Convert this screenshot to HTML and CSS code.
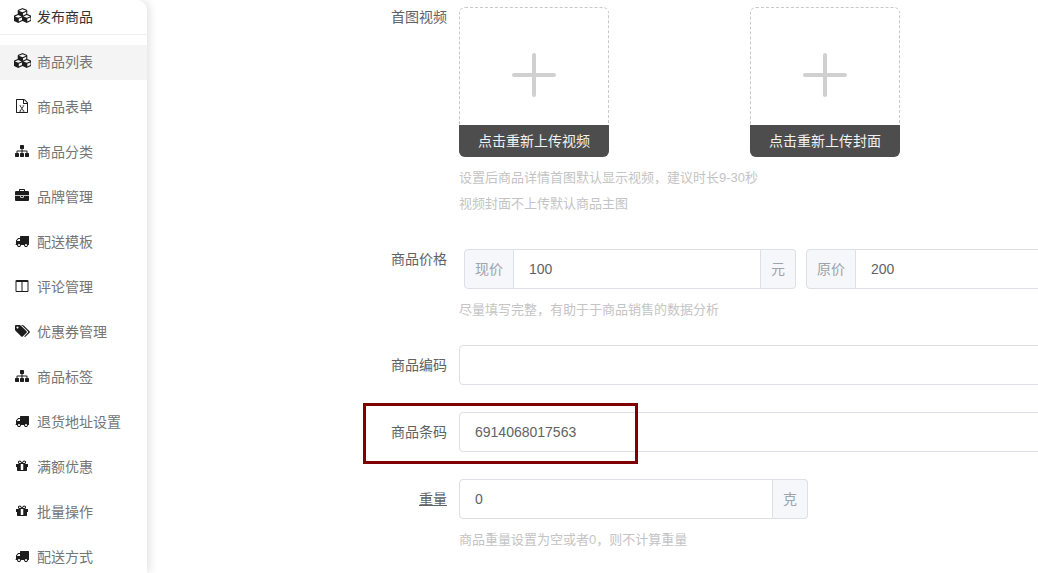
FILE: index.html
```html
<!DOCTYPE html>
<html lang="zh-CN">
<head>
<meta charset="utf-8">
<title>商品</title>
<link rel="stylesheet" href="styles.css">
</head>
<body>
<svg class="defs" aria-hidden="true">
  <symbol id="i-cubes" viewBox="0 0 2048 1792"><path d="M576 1632l384-192v-314l-384 164v342zm-64-454l404-173-404-173-404 173 404 173zm1088 454l384-192v-314l-384 164v342zm-64-454l404-173-404-173-404 173 404 173zm-448-293l384-165v-266l-384 164v267zm-64-379l441-189-441-189-441 189 441 189zm1088 518v416q0 36-19 67t-52 47l-448 224q-25 14-57 14t-57-14l-448-224q-4-2-6-4-2 2-6 4l-448 224q-25 14-57 14t-57-14l-448-224q-33-16-52-47t-19-67v-416q0-38 21.500-70t56.500-48l434-186v-400q0-38 21.500-70t56.500-48l448-192q23-10 50-10t50 10l448 192q35 16 56.500 48t21.500 70v400l434 186q36 16 57 48t21 70z"/></symbol>
  <symbol id="i-file" viewBox="0 0 1792 1792"><path d="M1596 380q28 28 48 76t20 88v1152q0 40-28 68t-68 28h-1344q-40 0-68-28t-28-68v-1600q0-40 28-68t68-28h896q40 0 88 20t76 48zm-444-244v376h376q-10-29-22-41l-313-313q-12-12-41-22zm384 1528v-1024h-416q-40 0-68-28t-28-68v-416h-768v1536h1280z"/><path d="M560 820h230v90h-60l150 220 150-220h-60v-90h230v90h-60l-210 290 220 300h60v90h-240v-90h60l-150-220-150 220h60v90h-240v-90h60l220-300-210-290h-60z"/></symbol>
  <symbol id="i-sitemap" viewBox="0 0 1792 1792"><path d="M1792 1248v320q0 40-28 68t-68 28h-320q-40 0-68-28t-28-68v-320q0-40 28-68t68-28h96v-192h-512v192h96q40 0 68 28t28 68v320q0 40-28 68t-68 28h-320q-40 0-68-28t-28-68v-320q0-40 28-68t68-28h96v-192h-512v192h96q40 0 68 28t28 68v320q0 40-28 68t-68 28h-320q-40 0-68-28t-28-68v-320q0-40 28-68t68-28h96v-192q0-52 38-90t90-38h512v-192h-96q-40 0-68-28t-28-68v-320q0-40 28-68t68-28h320q40 0 68 28t28 68v320q0 40-28 68t-68 28h-96v192h512q52 0 90 38t38 90v192h96q40 0 68 28t28 68z"/></symbol>
  <symbol id="i-briefcase" viewBox="0 0 1792 1792"><path d="M640 256h512v-128h-512v128zm1152 640v480q0 66-47 113t-113 47h-1472q-66 0-113-47t-47-113v-480h672v160q0 26 19 45t45 19h320q26 0 45-19t19-45v-160h672zm-768 0v128h-256v-128h256zm768-480v384h-1792v-384q0-66 47-113t113-47h352v-160q0-40 28-68t68-28h576q40 0 68 28t28 68v160h352q66 0 113 47t47 113z"/></symbol>
  <symbol id="i-truck" viewBox="0 0 1792 1792"><path d="M640 1408q0-52-38-90t-90-38-90 38-38 90 38 90 90 38 90-38 38-90zm-384-512h384v-256h-158q-13 0-22 9l-195 195q-9 9-9 22v30zm1280 512q0-52-38-90t-90-38-90 38-38 90 38 90 90 38 90-38 38-90zm256-1088v1024q0 15-4 26.500t-13.500 18.500-16.500 11.500-23.500 6-22.500 2-25.500 0-22.500-.5q0 106-75 181t-181 75-181-75-75-181h-384q0 106-75 181t-181 75-181-75-75-181h-64q-3 0-22.500.5t-25.500 0-22.500-2-23.500-6-16.500-11.500-13.500-18.500-4-26.500q0-26 19-45t45-19v-320q0-8-.5-35t0-38 2.500-34.500 6.500-37 14-30.500 22.500-30l198-198q19-19 50.500-32t58.500-13h160v-192q0-26 19-45t45-19h1024q26 0 45 19t19 45z"/></symbol>
  <symbol id="i-columns" viewBox="0 0 1792 1792"><path d="M224 1536h608v-1152h-640v1120q0 13 9.500 22.500t22.500 9.500zm1376-32v-1120h-640v1152h608q13 0 22.500-9.500t9.500-22.500zm128-1216v1216q0 66-47 113t-113 47h-1344q-66 0-113-47t-47-113v-1216q0-66 47-113t113-47h1344q66 0 113 47t47 113z"/></symbol>
  <symbol id="i-tags" viewBox="0 0 1920 1792"><path d="M448 448q0-53-37.500-90.500t-90.500-37.500-90.500 37.500-37.500 90.500 37.500 90.500 90.500 37.500 90.500-37.500 37.500-90.500zm1067 576q0 53-37 90l-491 492q-39 37-91 37-53 0-90-37l-715-716q-38-37-64.500-101t-26.500-117v-416q0-52 38-90t90-38h416q53 0 117 26.500t102 64.500l715 714q37 39 37 91zm384 0q0 53-37 90l-491 492q-39 37-91 37-36 0-59-14t-53-45l470-470q37-37 37-90 0-52-37-91l-715-714q-38-38-102-64.500t-117-26.500h224q53 0 117 26.500t102 64.500l715 714q37 39 37 91z"/></symbol>
  <symbol id="i-gift" viewBox="0 0 1792 1792"><path d="M1056 1356v-716h-320v716q0 25 18 38.500t46 13.500h192q28 0 46-13.500t18-38.500zm-456-844h195l-126-161q-26-31-69-31-40 0-68 28t-28 68 28 68 68 28zm688-96q0-40-28-68t-68-28q-43 0-69 31l-125 161h194q40 0 68-28t28-68zm376 256v320q0 14-9 23t-23 9h-96v416q0 40-28 68t-68 28h-1088q-40 0-68-28t-28-68v-416h-96q-14 0-23-9t-9-23v-320q0-14 9-23t23-9h440q-93 0-158.500-65.500t-65.500-158.500 65.500-158.500 158.500-65.500q107 0 168 77l128 165 128-165q61-77 168-77 93 0 158.500 65.500t65.500 158.500-65.500 158.500-158.500 65.500h440q14 0 23 9t9 23z"/></symbol>
</svg>

<div class="page">
  <aside class="sidebar">
    <div class="side-head">
      <span class="ico"><svg class="cubes"><use href="#i-cubes"/></svg></span>发布商品
    </div>
    <nav class="side-list">
      <a class="side-item active"><span class="ico"><svg class="cubes"><use href="#i-cubes"/></svg></span>商品列表</a>
      <a class="side-item"><span class="ico"><svg><use href="#i-file"/></svg></span>商品表单</a>
      <a class="side-item"><span class="ico"><svg><use href="#i-sitemap"/></svg></span>商品分类</a>
      <a class="side-item"><span class="ico"><svg><use href="#i-briefcase"/></svg></span>品牌管理</a>
      <a class="side-item"><span class="ico"><svg><use href="#i-truck"/></svg></span>配送模板</a>
      <a class="side-item"><span class="ico"><svg><use href="#i-columns"/></svg></span>评论管理</a>
      <a class="side-item"><span class="ico"><svg class="tags"><use href="#i-tags"/></svg></span>优惠券管理</a>
      <a class="side-item"><span class="ico"><svg><use href="#i-sitemap"/></svg></span>商品标签</a>
      <a class="side-item"><span class="ico"><svg><use href="#i-truck"/></svg></span>退货地址设置</a>
      <a class="side-item"><span class="ico"><svg><use href="#i-gift"/></svg></span>满额优惠</a>
      <a class="side-item"><span class="ico"><svg><use href="#i-gift"/></svg></span>批量操作</a>
      <a class="side-item"><span class="ico"><svg><use href="#i-truck"/></svg></span>配送方式</a>
    </nav>
  </aside>

  <main class="form">
    <section class="row row-video">
      <label class="label label-top">首图视频</label>
      <div class="field">
        <div class="uploads">
          <div class="upload">
            <div class="upload-plus"><svg class="plus" viewBox="0 0 44 44"><path d="M22 2v40M2 22h40"/></svg></div>
            <div class="upload-bar">点击重新上传视频</div>
          </div>
          <div class="upload">
            <div class="upload-plus"><svg class="plus" viewBox="0 0 44 44"><path d="M22 2v40M2 22h40"/></svg></div>
            <div class="upload-bar">点击重新上传封面</div>
          </div>
        </div>
        <p class="hint">设置后商品详情首图默认显示视频，建议时长9-30秒</p>
        <p class="hint hint-next">视频封面不上传默认商品主图</p>
      </div>
    </section>

    <section class="row row-price">
      <label class="label label-top">商品价格</label>
      <div class="field">
        <div class="prices">
          <div class="group group-price">
            <span class="addon addon-l">现价</span>
            <input class="input" value="100">
            <span class="addon addon-r">元</span>
          </div>
          <div class="group group-price">
            <span class="addon addon-l">原价</span>
            <input class="input" value="200">
          </div>
        </div>
        <p class="hint">尽量填写完整，有助于于商品销售的数据分析</p>
      </div>
    </section>

    <section class="row row-code">
      <label class="label">商品编码</label>
      <div class="field"><input class="input input-solo" value=""></div>
    </section>

    <section class="row row-code">
      <label class="label">商品条码</label>
      <div class="field"><input class="input input-solo" value="6914068017563"></div>
    </section>

    <section class="row row-weight">
      <label class="label"><span class="underline">重量</span></label>
      <div class="field">
        <div class="group group-weight">
          <input class="input" value="0">
          <span class="addon addon-r">克</span>
        </div>
        <p class="hint">商品重量设置为空或者0，则不计算重量</p>
      </div>
    </section>

    <div class="callout"></div>
  </main>
</div>
</body>
</html>
```
FILE: styles.css
```css
* { box-sizing: border-box; }
html, body { margin: 0; height: 100%; overflow: hidden; background: #fff; }
body {
  font-family: "Liberation Sans", "Noto Sans CJK SC", sans-serif;
  font-size: 14px;
  color: #606266;
}
.defs { display: none; }
.page { display: flex; height: 573px; overflow: hidden; position: relative; }

/* sidebar */
.sidebar {
  flex: 0 0 147px;
  height: 573px;
  background: #fff;
  border-top-right-radius: 10px;
  box-shadow: 3px 0 8px rgba(0, 0, 0, .11);
  position: relative;
}
.side-head {
  display: flex;
  align-items: center;
  height: 35px;
  padding: 0 0 3px 10px;
  color: #333;
  border-bottom: 1px solid #eeeef4;
}
.side-item {
  display: flex;
  align-items: center;
  height: 35px;
  margin-top: 10px;
  padding: 0 0 4px 10px;
  color: #757575;
}
.side-item.active { background: #f4f4f4; }
.ico {
  flex: 0 0 24px;
  margin-right: 3px;
  display: flex;
  justify-content: center;
  align-items: center;
}
.ico svg { width: 14px; height: 14px; fill: #1c1c1c; display: block; }
.ico svg.cubes { width: 17px; height: 15px; }
.ico svg.tags { width: 15px; height: 14px; }

/* form */
.form { flex: 1 1 auto; min-width: 0; padding-top: 7px; position: relative; }
.row { display: flex; align-items: flex-start; }
.row-video { margin-bottom: 32px; }
.row-price { margin-bottom: 22px; }
.row-code { margin-bottom: 27px; }
.label {
  flex: 0 0 312px;
  padding-right: 12px;
  text-align: right;
  line-height: 40px;
  color: #606266;
}
.label-top { line-height: 20px; }
.underline { text-decoration: underline; }
.field { flex: 0 0 auto; }

/* uploads */
.uploads { display: flex; gap: 141px; }
.upload {
  width: 150px;
  height: 150px;
  border: 1px dashed #c8c8c8;
  border-radius: 6px;
  display: flex;
  flex-direction: column;
}
.upload-plus {
  flex: 1 1 auto;
  display: flex;
  justify-content: center;
  align-items: flex-start;
  padding-top: 45px;
}
.plus { width: 44px; height: 44px; fill: none; stroke: #d0d0d0; stroke-width: 4; stroke-linecap: round; }
.upload-bar {
  height: 32px;
  margin: 0 -1px -1px;
  background: #4d4d4d;
  border-radius: 0 0 6px 6px;
  color: #f2f2f2;
  line-height: 33px;
  text-align: center;
}
.hint {
  margin: 8px 0 0;
  font-size: 13px;
  line-height: 26px;
  color: #c4c4c4;
}
.hint-next { margin-top: 0; }

/* inputs */
.prices { display: flex; gap: 10px; padding-left: 5px; width: 800px; }
.group { display: flex; height: 40px; }
.group-price { flex: 0 0 332px; }
.group-weight { width: 349px; }
.input {
  flex: 1 1 auto;
  min-width: 0;
  height: 40px;
  padding: 0 15px;
  border: 1px solid #dcdfe6;
  border-radius: 4px;
  outline: none;
  background: #fff;
  font: inherit;
  color: #606266;
}
.input-solo { display: block; width: 800px; }
.addon {
  flex: 0 0 auto;
  height: 40px;
  line-height: 38px;
  padding: 0 10px;
  background: #f5f7fa;
  border: 1px solid #dcdfe6;
  color: #a0a3a8;
}
.addon-l { border-radius: 4px 0 0 4px; border-right: 1px solid #dcdfe6; }
.addon-r { border-radius: 0 4px 4px 0; border-left: 0; }
.addon-l + .input { border-left: 0; border-radius: 0 4px 4px 0; }
.group-price .addon-l + .input { border-radius: 0; }
.group-price .input:last-child { border-radius: 0 4px 4px 0; }
.group-weight .input { border-radius: 4px 0 0 4px; }

/* annotation drawn over the screenshot */
.callout {
  position: absolute;
  left: 216px;
  top: 403px;
  width: 275px;
  height: 61px;
  border: 3px solid #800000;
  pointer-events: none;
}
```
